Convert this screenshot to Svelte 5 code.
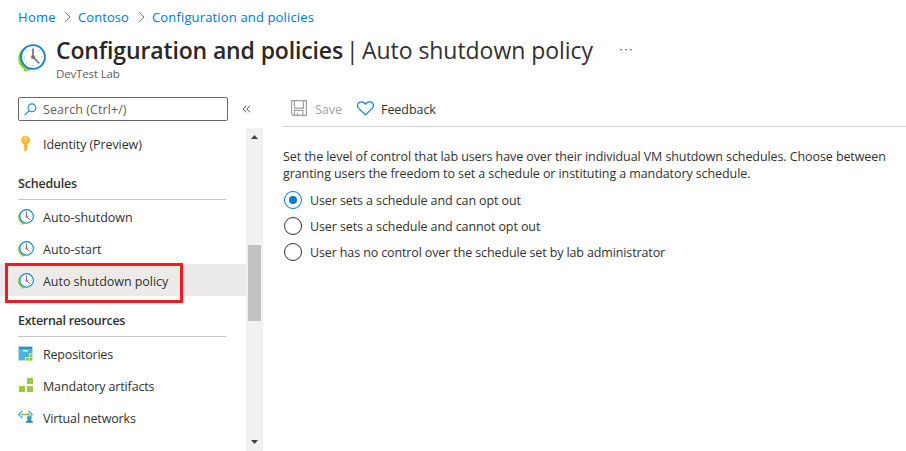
<script>
  const crumbs = ['Home', 'Contoso', 'Configuration and policies'];
  const groups = [
    { title: '', items: [{ label: 'Identity (Preview)', icon: 'key', ls: -0.1 }] },
    {
      title: 'Schedules',
      items: [
        { label: 'Auto-shutdown', icon: 'clock', ls: -0.02 },
        { label: 'Auto-start', icon: 'clock', ls: 0 },
        { label: 'Auto shutdown policy', icon: 'clock', ls: -0.04, selected: true }
      ]
    },
    {
      title: 'External resources',
      items: [
        { label: 'Repositories', icon: 'repo', ls: -0.19 },
        { label: 'Mandatory artifacts', icon: 'blocks', ls: -0.15 },
        { label: 'Virtual networks', icon: 'network', ls: -0.15 }
      ]
    }
  ];
  const options = [
    'User sets a schedule and can opt out',
    'User sets a schedule and cannot opt out',
    'User has no control over the schedule set by lab administrator'
  ];
  let chosen = $state(0);
</script>

{#snippet clock(size)}
  <svg width={size} height={size} viewBox="0 0 28 28">
    <path d="M7.500 3C1.500 6 -1 12 .8 18.500C2 22 4 24 6.300 25.200L5.600 27.600L13.500 26L9 20.500L8 22.500C3 18 3 9 9 4Z" fill="#86d633" />
    <circle cx="15" cy="13" r="11.900" fill="#fff" stroke="#1580d3" stroke-width="1.900" />
    <path d="M15 3.500v1.300M15 21.200v1.300M5.500 13h1.300M23.200 13h1.300M8.300 6.300l.9.9M21.700 6.300l-.9.900M8.300 19.700l.9-.9" stroke="#999" stroke-width="1" />
    <path d="M15 4.800V13L21.300 19.300" fill="none" stroke="#737373" stroke-width="1.700" />
    <circle cx="15" cy="13" r="2" fill="#737373" />
  </svg>
{/snippet}

{#snippet icon(name)}
  {#if name === 'clock'}
    {@render clock(16)}
  {:else if name === 'key'}
    <svg width="16" height="16" viewBox="0 0 16 16">
      <path d="M7.500 0C10.500 0 12 2 12 4.300C12 6.300 11 7.600 9.500 8.300V13.500L7.700 15.500L6 13.700V12.500L6.800 11.500L6 10.500V8.400C4.200 7.500 3 6.200 3 4.300C3 2 4.600 0 7.500 0Z" fill="#fdb92e" />
      <path d="M4.800 4.700h5.400" stroke="#ffdf87" stroke-width=".8" />
      <circle cx="7.500" cy="2.200" r="1" fill="#fff" />
      <path d="M7.300 9v5" stroke="#f0a51d" stroke-width=".9" />
    </svg>
  {:else if name === 'repo'}
    <svg width="16" height="16" viewBox="0 0 16 16">
      <path d="M0 0h15v15H0z" fill="#aedcec" />
      <path d="M1 1h13v2.600H1z" fill="#2694c4" />
      <path d="M1 4h13v10H1z" fill="#4eb3dc" />
      <path d="M5 4.200h5v1.300H5z" fill="#fff" />
      <path d="M7 11h4V7.500h4V15H7z" fill="#e6f3d3" />
      <path d="M8 12h2.700v2.500H8zM11.500 12h2.800v2.500h-2.800zM11.500 8.500h2.800v2.700h-2.800z" fill="#91c52f" />
    </svg>
  {:else if name === 'blocks'}
    <svg width="16" height="16" viewBox="0 0 16 16">
      <path d="M9 0h6v6H9zM1 8h6v6H1zM9 8h6v6H9z" fill="#9acb36" />
    </svg>
  {:else}
    <svg width="16" height="16" viewBox="0 0 16 16">
      <path d="M4.500 .8L.8 4.500L4.500 8.200M10.500 .8L14.200 4.500L10.500 8.200" fill="none" stroke="#59b4d9" stroke-width="1.400" />
      <path d="M3 4.500h9" stroke="#a5cf59" stroke-width=".8" />
      <circle cx="4.500" cy="4.500" r="1.100" fill="#86ba27" /><circle cx="7.500" cy="4.500" r="1.100" fill="#86ba27" /><circle cx="10.300" cy="4.500" r="1.200" fill="#86ba27" />
      <path d="M9 6.200h4.600v2.600H13L14 12H8.700L9.700 8.800H9z" fill="#3999c6" />
      <path d="M8 11.200h6.800v1.600H8z" fill="#3c78ad" />
    </svg>
  {/if}
{/snippet}

<div class="page">
  <nav class="crumbs">
    {#each crumbs as crumb, i}
      {#if i > 0}
        <svg class="sep" width="7" height="12" viewBox="0 0 7 12"><path d="M.8 1L6 6L.8 11" fill="none" stroke="#777" stroke-width="1" /></svg>
      {/if}
      <a href="#top" class="crumb c{i}">{crumb}</a>
    {/each}
  </nav>

  <header>
    <span class="logo">{@render clock(28)}</span>
    <div class="titles">
      <h1>
        <span class="strong">Configuration and policies</span><span class="bar">|</span><span class="thin">Auto shutdown policy</span>
        <svg class="more" width="13" height="3" viewBox="0 0 13 3"><path d="M.5 0h1.500v1.300H.5zM5.300 0h1.500v1.300H5.300zM10.100 0h1.500v1.300h-1.500z" fill="#555" /></svg>
      </h1>
      <div class="sub">DevTest Lab</div>
    </div>
  </header>

  <div class="body">
    <aside>
      <div class="searchrow">
        <div class="search">
          <svg width="13" height="13" viewBox="0 0 13 13"><circle cx="8" cy="4.800" r="3.900" fill="none" stroke="#1783d6" stroke-width="1.100" /><path d="M5.200 7.600L.6 12.200" stroke="#1783d6" stroke-width="1.200" /></svg>
          <span>Search (Ctrl+/)</span>
        </div>
        <svg class="collapse" width="9" height="8" viewBox="0 0 9 8"><path d="M4.200.7L1 4L4.200 7.300M8 .7L4.800 4L8 7.300" fill="none" stroke="#555" stroke-width="1" /></svg>
      </div>
      <div class="navwrap">
        <div class="menu">
          {#each groups as group}
            {#if group.title}<h2 class:long={group.title.length > 10}>{group.title}</h2>{/if}
            {#each group.items as item}
              <div class="item" class:selected={item.selected}>
                <span class="ico">{@render icon(item.icon)}</span>
                <span style:letter-spacing="{item.ls}px">{item.label}</span>
                {#if item.selected}<i class="highlight"></i>{/if}
              </div>
            {/each}
          {/each}
        </div>
        <div class="scroll">
          <svg width="7" height="4" viewBox="0 0 7 4"><path d="M0 4L3.500 0L7 4z" fill="#404040" /></svg>
          <div class="thumb"></div>
          <svg width="7" height="4" viewBox="0 0 7 4"><path d="M0 0L3.500 4L7 0z" fill="#404040" /></svg>
        </div>
      </div>
    </aside>

    <main>
      <div class="toolbar">
        <svg class="disk" width="16" height="16" viewBox="0 0 16 16"><path d="M.6.6h14.800v14.800H2.500L.6 13.500zM3.500.6v7.500h9V.6M3.500 15.400v-5h8.500v5M6.500 15.400v-2.700" fill="none" stroke="#a09f9d" stroke-width="1.200" /></svg>
        <span class="save">Save</span>
        <svg class="heart" width="17" height="15" viewBox="0 0 17 15"><path d="M8.500 14L1.800 7.300C.3 5.700.3 3.500 1.700 2C3.300.4 5.800.4 7.400 2L8.500 3.200L9.600 2C11.200.4 13.700.4 15.300 2C16.700 3.500 16.700 5.700 15.200 7.300Z" fill="none" stroke="#1783d6" stroke-width="1.200" /></svg>
        <span class="feedback">Feedback</span>
      </div>
      <p>Set the level of control that lab users have over their individual VM shutdown schedules. Choose between<br />granting users the freedom to set a schedule or instituting a mandatory schedule.</p>
      <div class="options">
        {#each options as option, i}
          <label class="o{i}">
            <input type="radio" name="policy" value={i} bind:group={chosen} />
            <span>{option}</span>
          </label>
        {/each}
      </div>
    </main>
  </div>
</div>

<style>
  :global(body) { background: #fff; overflow: hidden; }
  .page { width: 906px; height: 451px; overflow: hidden; display: flex; flex-direction: column; font: 12.5px/17px "Open Sans", "Noto Sans", sans-serif; color: #323130; }
  svg { display: block; flex: none; }
  .crumbs { height: 34px; flex: none; padding-left: 18px; display: flex; align-items: center; box-sizing: border-box; font-size: 13px; white-space: nowrap; }
  .crumb { color: #0078d4; text-decoration: none; }
  .c0 { width: 38px; letter-spacing: .3px; }
  .c1 { width: 52px; letter-spacing: .08px; }
  .c2 { letter-spacing: .15px; }
  .sep { margin: 0 7px 0 8px; }
  header { height: 59px; flex: none; display: flex; padding-left: 18px; box-sizing: border-box; }
  .logo { width: 38px; padding-top: 10px; }
  h1 { margin: 0; height: 32px; display: flex; align-items: center; font-size: 23px; line-height: 32px; font-weight: 400; white-space: nowrap; }
  .strong { font-weight: 600; width: 290px; letter-spacing: -.13px; color: #292827; }
  .bar { width: 16px; }
  .thin { width: 258px; letter-spacing: -.05px; }
  .sub { font-size: 11.5px; line-height: 16px; letter-spacing: -.15px; color: #605e5c; }
  .body { flex: 1; min-height: 0; display: flex; }
  aside { width: 263px; flex: none; display: flex; flex-direction: column; }
  .searchrow { height: 35px; flex: none; display: flex; align-items: flex-start; padding: 4px 0 0 18px; box-sizing: border-box; }
  .search { width: 210px; height: 24px; box-sizing: border-box; border: 1px solid #6b6967; border-radius: 2px; display: flex; align-items: center; padding-left: 5px; gap: 6px; color: #605e5c; letter-spacing: .07px; }
  .collapse { margin: 8px 0 0 14px; }
  .navwrap { flex: 1; min-height: 0; display: flex; }
  .menu { width: 246px; margin-top: -1px; }
  h2 { margin: 0 20px 0 18px; height: 41px; box-sizing: border-box; border-bottom: 1px solid #c8c6c4; padding-top: 16px; font-size: 12.5px; line-height: 17px; font-weight: 600; letter-spacing: -.19px; }
  h2.long { letter-spacing: -.3px; }
  .item { height: 32px; display: flex; align-items: center; padding: 2px 0 0 18px; box-sizing: border-box; white-space: nowrap; position: relative; }
  .ico { width: 25px; height: 16px; }
  .selected { background: #edebe9; }
  .highlight { position: absolute; left: 5px; top: -1px; width: 178px; height: 40px; box-sizing: border-box; border: 3px solid #ed1c24; }
  .scroll { width: 17px; background: #f1f1f1; display: flex; flex-direction: column; align-items: center; padding: 7px 0; box-sizing: border-box; }
  .thumb { width: 13px; height: 76px; background: #c1c1c1; margin: 106px 0 auto; }
  main { flex: 1; margin-left: 20px; min-width: 0; }
  .toolbar { height: 34px; box-sizing: border-box; border-bottom: 1px solid #d2d0ce; display: flex; align-items: center; padding: 0 0 2px 8px; }
  .disk { margin-top: -1px; }
  .save { margin: 2px 15px 0 8px; width: 27px; color: #a19f9d; letter-spacing: -.05px; }
  .feedback { margin: 2px 0 0 7px; letter-spacing: -.05px; }
  .heart { margin-top: -1px; }
  p { margin: 21px 0 0; letter-spacing: -.09px; white-space: nowrap; }
  .options { margin-top: 5px; }
  label { height: 26px; display: flex; align-items: center; gap: 8px; letter-spacing: -.1px; white-space: nowrap; }
  .o2 { letter-spacing: -.125px; }
  input { appearance: none; margin: 0 0 0 1px; width: 18px; height: 18px; border: 1px solid #323130; border-radius: 50%; display: grid; place-items: center; }
  input:checked { border-color: #0078d4; }
  input:checked::after { content: ""; width: 8px; height: 8px; border-radius: 50%; background: #0078d4; }
</style>
